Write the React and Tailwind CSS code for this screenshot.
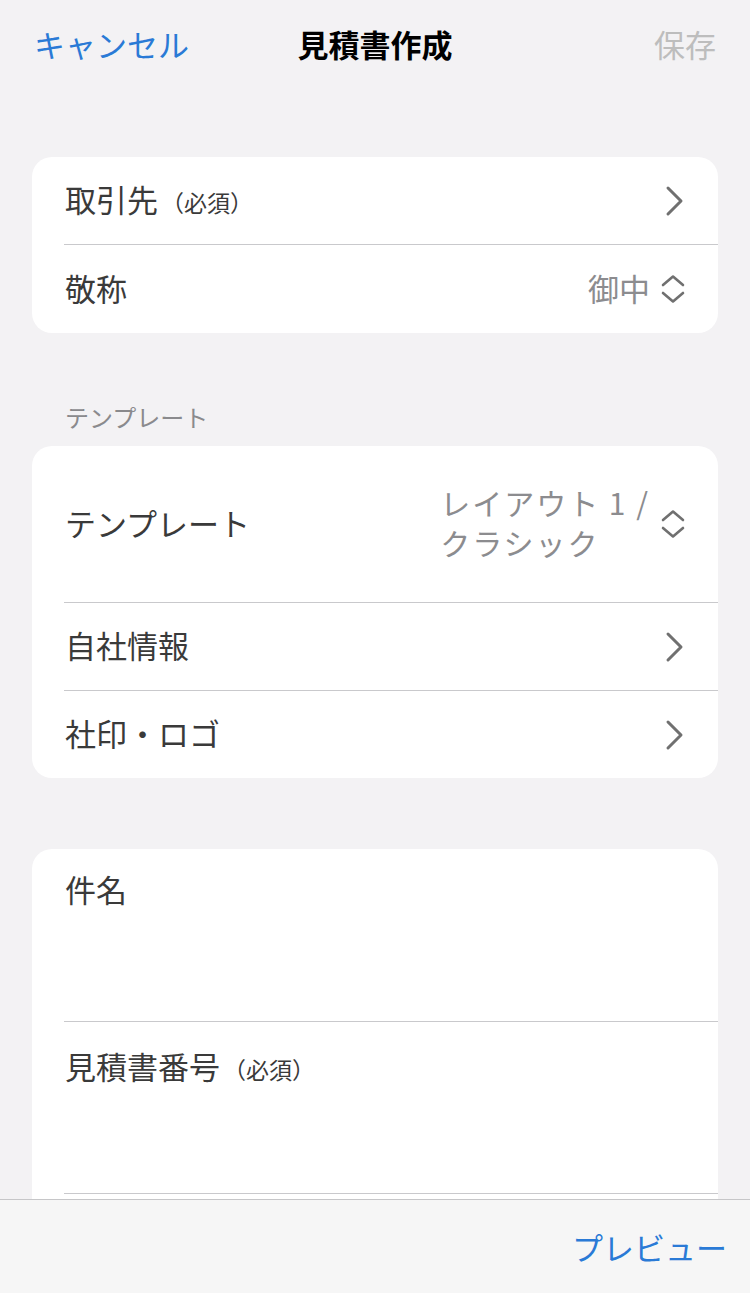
const font = { fontFamily: '"Noto Sans CJK JP", "Noto Sans", sans-serif' };

function Chevron() {
  return (
    <svg width="22" height="32" viewBox="0 0 22 32" className="shrink-0">
      <polyline points="4,3 17,16 4,29" fill="none" stroke="#707070" strokeWidth="3" strokeLinecap="round" strokeLinejoin="round" />
    </svg>
  );
}

function UpDown() {
  return (
    <svg width="26" height="30" viewBox="0 0 26 30" className="shrink-0">
      <polyline points="3,11 13,2.5 23,11" fill="none" stroke="#707070" strokeWidth="2.6" strokeLinecap="round" strokeLinejoin="round" />
      <polyline points="3,19 13,27.5 23,19" fill="none" stroke="#707070" strokeWidth="2.6" strokeLinecap="round" strokeLinejoin="round" />
    </svg>
  );
}

function Divider() {
  return <div className="ml-[32px] h-px bg-[#c9c9cc]" />;
}

function Row({ label, sub, right, h = 'h-[87px]' }) {
  return (
    <div className={`${h} flex items-center justify-between pl-[33px] pr-[32px]`}>
      <div className="flex items-baseline text-[31px] text-[#3a3a3a] leading-none pb-[4px]">
        <span>{label}</span>
        {sub && <span className="text-[23px] ml-[3px]">{sub}</span>}
      </div>
      {right}
    </div>
  );
}

export default function App() {
  return (
    <div className="h-[1293px] w-[750px] flex flex-col bg-[#f3f2f4] overflow-hidden" style={font}>
      <div className="flex-1 overflow-hidden">
        <header className="h-[86px] grid grid-cols-[1fr_auto_1fr] items-center px-[34px]">
          <button className="justify-self-start text-[31px] text-[#2a7ad6] leading-none">キャンセル</button>
          <h1 className="text-[31px] font-bold text-black leading-none">見積書作成</h1>
          <button className="justify-self-end text-[31px] text-[#bdbdbd] leading-none">保存</button>
        </header>

        <section className="mt-[71px] mx-[32px] bg-white rounded-[20px] overflow-hidden">
          <Row label="取引先" sub="（必須）" right={<Chevron />} />
          <Divider />
          <Row
            label="敬称"
            h="h-[88px]"
            right={
              <div className="flex items-center gap-[10px] text-[31px] text-[#8c8c8f] leading-none">
                <span className="pb-[3px]">御中</span>
                <UpDown />
              </div>
            }
          />
        </section>

        <div className="mt-[69px] px-[65px] h-[30px] flex items-center text-[24px] text-[#8a8a8d]">テンプレート</div>

        <section className="mt-[14px] mx-[32px] bg-white rounded-[20px] overflow-hidden">
          <div className="h-[156px] flex items-center justify-between pl-[33px] pr-[32px]">
            <span className="text-[31px] text-[#3a3a3a] leading-none pb-[4px]">テンプレート</span>
            <div className="flex items-center gap-[10px]">
              <div className="text-[30px] leading-[40px] text-[#8c8c8f] tracking-[2px] pb-[4px]">
                レイアウト 1 /<br />クラシック
              </div>
              <UpDown />
            </div>
          </div>
          <Divider />
          <Row label="自社情報" right={<Chevron />} />
          <Divider />
          <Row label="社印・ロゴ" right={<Chevron />} />
        </section>

        <section className="mt-[71px] mx-[32px] bg-white rounded-t-[20px] overflow-hidden">
          <div className="h-[172px] pl-[33px] pt-[24px]">
            <span className="text-[31px] text-[#3a3a3a] leading-none">件名</span>
          </div>
          <Divider />
          <div className="h-[171px] pl-[33px] pt-[28px]">
            <div className="flex items-baseline text-[31px] text-[#3a3a3a] leading-none">
              <span>見積書番号</span>
              <span className="text-[23px] ml-[3px]">（必須）</span>
            </div>
          </div>
          <Divider />
          <div className="h-[80px]" />
        </section>
      </div>

      <footer className="h-[94px] shrink-0 border-t border-[#c6c6c8] bg-[#f6f6f6] flex items-center justify-end pr-[23px]">
        <button className="text-[31px] text-[#2a7ad6] leading-none">プレビュー</button>
      </footer>
    </div>
  );
}
